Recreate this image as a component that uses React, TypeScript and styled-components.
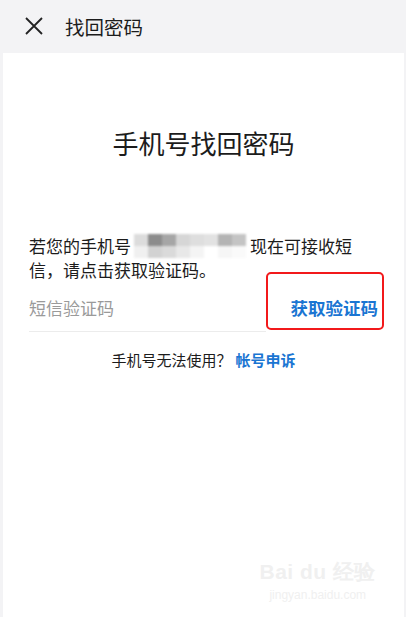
import React from 'react';
import styled, { createGlobalStyle } from 'styled-components';

const GlobalStyle = createGlobalStyle`
    html, body, #root {
        margin: 0;
        padding: 0;
        height: 100%;
    }
    body {
        font-family: 'Noto Sans CJK SC', 'Noto Sans', sans-serif;
        background-color: #f3f3f5;
        color: #1c1c1c;
    }
`;

const Page = styled.div`
    height: 100%;
    display: flex;
    flex-direction: column;
    background-color: #f3f3f5;
`;
const Header = styled.div`
    height: 53px;
    display: flex;
    align-items: center;
    padding-left: 24px;
    box-sizing: border-box;
`;
const CloseIcon = styled.svg`
    width: 20px;
    height: 20px;
    margin-right: 21px;
`;
const HeaderTitle = styled.h1`
    margin: 0;
    font-size: 19.5px;
    font-weight: 400;
    line-height: 26px;
    color: #1c1c1c;
`;
const Card = styled.div`
    position: relative;
    flex: 1;
    margin: 0 2px 0 3px;
    background-color: #ffffff;
    padding: 0 26px;
`;
const Title = styled.h2`
    margin: 72px 0 0;
    text-align: center;
    font-size: 26px;
    font-weight: 400;
    line-height: 36px;
    color: #1c1c1c;
`;
const Desc = styled.p`
    margin: 73px 0 0;
    max-width: 335px;
    font-size: 17px;
    line-height: 24px;
    color: #1c1c1c;
`;
const Mosaic = styled.span`
    display: inline-grid;
    grid-template-columns: repeat(8, 14px);
    grid-template-rows: repeat(2, 12px);
    vertical-align: top;
    margin: 0 4px 0 3px;
    filter: blur(1.2px);
`;
const Tile = styled.span<{ $c: string }>`
    background-color: ${(p) => p.$c};
`;
const FieldRow = styled.div`
    position: relative;
    display: flex;
    align-items: center;
    margin-top: 8px;
    padding: 6px 0 11px;
    border-bottom: 1px solid #ececec;
    margin-right: 112px;
`;
const CodeInput = styled.input`
    flex: 1;
    border: none;
    outline: none;
    padding: 0;
    font-family: inherit;
    font-size: 17px;
    line-height: 24px;
    color: #1c1c1c;
    &::placeholder {
        color: #9a9a9a;
    }
`;
const GetCodeBtn = styled.button`
    position: absolute;
    right: -112px;
    top: 6px;
    border: none;
    background: none;
    padding: 0;
    font-family: inherit;
    font-size: 17.5px;
    font-weight: 700;
    line-height: 24px;
    color: #1a75d2;
`;
const Highlight = styled.div`
    position: absolute;
    right: -118px;
    top: -18px;
    width: 118px;
    height: 58px;
    box-sizing: border-box;
    border: 2.5px solid #f2191b;
    border-radius: 5px;
    pointer-events: none;
`;
const Help = styled.p`
    margin: 17px 0 0;
    text-align: center;
    font-size: 15px;
    line-height: 22px;
    color: #1c1c1c;
`;
const HelpLink = styled.a`
    color: #1a75d2;
    font-weight: 700;
    text-decoration: none;
    margin-left: 4px;
`;
const Watermark = styled.div`
    position: absolute;
    right: 28px;
    bottom: 16px;
    text-align: center;
    color: #f0f0f0;
    font-family: 'Liberation Sans', sans-serif;
    font-weight: 700;
    line-height: 1;
`;
const WmLogo = styled.div`
    font-size: 21px;
    letter-spacing: 0.5px;
`;
const WmUrl = styled.div`
    margin-top: 7px;
    font-size: 12px;
    font-weight: 400;
`;

const tiles = [
    '#dcdcdc', '#8c8c8c', '#a6a6a6', '#d6d6d6', '#dedede', '#e2e2e2', '#b4b4b4', '#c4c4c4',
    '#f0f0f0', '#d2d2d2', '#dadada', '#e8e8e8', '#f4f4f4', '#ffffff', '#f6f6f6', '#fafafa',
];

export default function App() {
    return (
        <>
            <GlobalStyle />
            <Page>
                <Header>
                    <CloseIcon viewBox="0 0 20 20">
                        <path d="M2 1 L18 17 M18 1 L2 17" stroke="#222" strokeWidth="1.8" fill="none" />
                    </CloseIcon>
                    <HeaderTitle>找回密码</HeaderTitle>
                </Header>
                <Card>
                    <Title>手机号找回密码</Title>
                    <Desc>
                        若您的手机号
                        <Mosaic>
                            {tiles.map((c, i) => (
                                <Tile key={i} $c={c} />
                            ))}
                        </Mosaic>
                        现在可接收短信，请点击获取验证码。
                    </Desc>
                    <FieldRow>
                        <CodeInput placeholder="短信验证码" />
                        <GetCodeBtn>获取验证码</GetCodeBtn>
                        <Highlight />
                    </FieldRow>
                    <Help>
                        手机号无法使用？<HelpLink>帐号申诉</HelpLink>
                    </Help>
                    <Watermark>
                        <WmLogo>Bai du 经验</WmLogo>
                        <WmUrl>jingyan.baidu.com</WmUrl>
                    </Watermark>
                </Card>
            </Page>
        </>
    );
}
